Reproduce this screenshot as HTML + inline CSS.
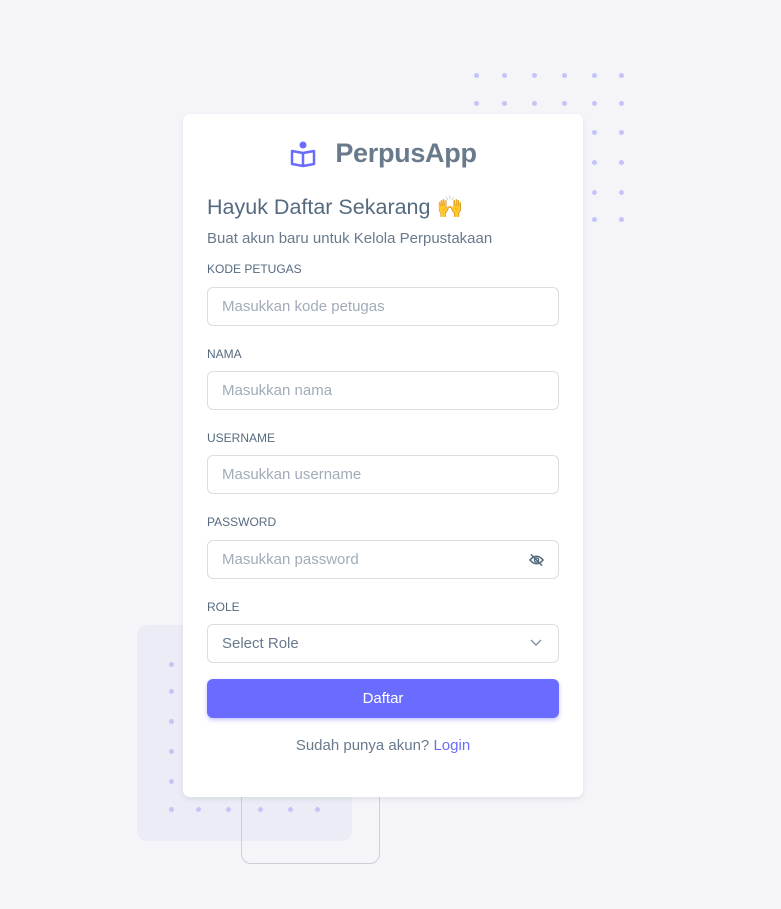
<!DOCTYPE html>
<html><head><style>
*{box-sizing:border-box;margin:0;padding:0}
body{width:781px;height:909px;background:#f5f5f9;font-family:"Liberation Sans",sans-serif;position:relative;overflow:hidden;color:#697a8d}
.dot{position:absolute;width:5px;height:5px;border-radius:50%;background:#c4c4f7}
.bgbox{position:absolute;left:137px;top:625px;width:215px;height:216px;background:#ececf6;border-radius:10px}
.outline{position:absolute;left:241px;top:700px;width:139px;height:164px;border:1px solid #cdcfd6;border-radius:10px}
.card{position:absolute;left:183px;top:114px;width:400px;height:683px;background:#fff;border-radius:7px;box-shadow:0 2px 6px rgba(67,89,113,.12)}
.logo{position:absolute;top:24px;left:0;width:100%;display:flex;justify-content:center;align-items:center;gap:18px}
.logo span{font-size:27px;font-weight:bold;color:#697a8d;letter-spacing:-0.3px}
h4{position:absolute;left:24px;top:81px;font-size:21.5px;font-weight:normal;color:#566a7f}
.sub{position:absolute;left:24px;top:116px;font-size:15px;color:#697a8d}
.lbl{position:absolute;left:24px;font-size:12px;color:#566a7f}
.inp{position:absolute;left:24px;width:352px;height:39px;border:1px solid #d9dee3;border-radius:6px;font-size:15px;color:#a1acb8;padding:10px 14px}
.btn{position:absolute;left:24px;top:565px;width:352px;height:39px;background:#696cff;border-radius:6px;color:#fff;font-size:15px;text-align:center;line-height:39px;box-shadow:0 2px 4px rgba(105,108,255,.4)}
.foot{position:absolute;top:623px;left:0;width:100%;text-align:center;font-size:15px;color:#697a8d}
.foot a{color:#696cff;text-decoration:none}
</style></head><body>
<div class="bgbox"></div>
<div class="outline"></div>
<div class="dot" style="left:474px;top:73px"></div><div class="dot" style="left:502px;top:73px"></div><div class="dot" style="left:532px;top:73px"></div><div class="dot" style="left:562px;top:73px"></div><div class="dot" style="left:592px;top:73px"></div><div class="dot" style="left:619px;top:73px"></div>
<div class="dot" style="left:474px;top:101px"></div><div class="dot" style="left:502px;top:101px"></div><div class="dot" style="left:532px;top:101px"></div><div class="dot" style="left:562px;top:101px"></div><div class="dot" style="left:592px;top:101px"></div><div class="dot" style="left:619px;top:101px"></div>
<div class="dot" style="left:592px;top:130px"></div><div class="dot" style="left:619px;top:130px"></div>
<div class="dot" style="left:592px;top:160px"></div><div class="dot" style="left:619px;top:160px"></div>
<div class="dot" style="left:592px;top:190px"></div><div class="dot" style="left:619px;top:190px"></div>
<div class="dot" style="left:592px;top:217px"></div><div class="dot" style="left:619px;top:217px"></div>
<div class="dot" style="left:169px;top:662px"></div><div class="dot" style="left:169px;top:689px"></div><div class="dot" style="left:169px;top:719px"></div><div class="dot" style="left:169px;top:749px"></div><div class="dot" style="left:169px;top:779px"></div>
<div class="dot" style="left:169px;top:807px"></div><div class="dot" style="left:196px;top:807px"></div><div class="dot" style="left:226px;top:807px"></div><div class="dot" style="left:258px;top:807px"></div><div class="dot" style="left:288px;top:807px"></div><div class="dot" style="left:315px;top:807px"></div>
<div class="card">
 <div class="logo">
  <svg width="28" height="28" viewBox="0 0 28 28"><circle cx="14" cy="5" r="3.5" fill="#696cff"/><path d="M3 11 L3 24 L14 26 L25 24 L25 11 L14 13 Z M14 13 L14 26" fill="none" stroke="#696cff" stroke-width="2.5" stroke-linejoin="round"/></svg>
  <span>PerpusApp</span>
 </div>
 <h4>Hayuk Daftar Sekarang 🙌</h4>
 <div class="sub">Buat akun baru untuk Kelola Perpustakaan</div>
 <div class="lbl" style="top:148px">KODE PETUGAS</div>
 <div class="inp" style="top:173px">Masukkan kode petugas</div>
 <div class="lbl" style="top:233px">NAMA</div>
 <div class="inp" style="top:257px">Masukkan nama</div>
 <div class="lbl" style="top:317px">USERNAME</div>
 <div class="inp" style="top:341px">Masukkan username</div>
 <div class="lbl" style="top:401px">PASSWORD</div>
 <div class="inp" style="top:426px">Masukkan password
  <svg style="position:absolute;right:14px;top:12px" width="15" height="14" viewBox="0 0 16 14"><path d="M1 7 Q8 -1 15 7 Q8 15 1 7Z" fill="none" stroke="#566a7f" stroke-width="1.6"/><circle cx="8" cy="7" r="2.2" fill="none" stroke="#566a7f" stroke-width="1.5"/><path d="M2 1 L14 13" stroke="#566a7f" stroke-width="1.6"/></svg>
 </div>
 <div class="lbl" style="top:486px">ROLE</div>
 <div class="inp" style="top:510px;color:#697a8d">Select Role
  <svg style="position:absolute;right:16px;top:14px" width="12" height="8" viewBox="0 0 12 8"><path d="M1 1 L6 6 L11 1" fill="none" stroke="#8592a3" stroke-width="1.4"/></svg>
 </div>
 <div class="btn">Daftar</div>
 <div class="foot">Sudah punya akun? <a>Login</a></div>
</div>
</body></html>
